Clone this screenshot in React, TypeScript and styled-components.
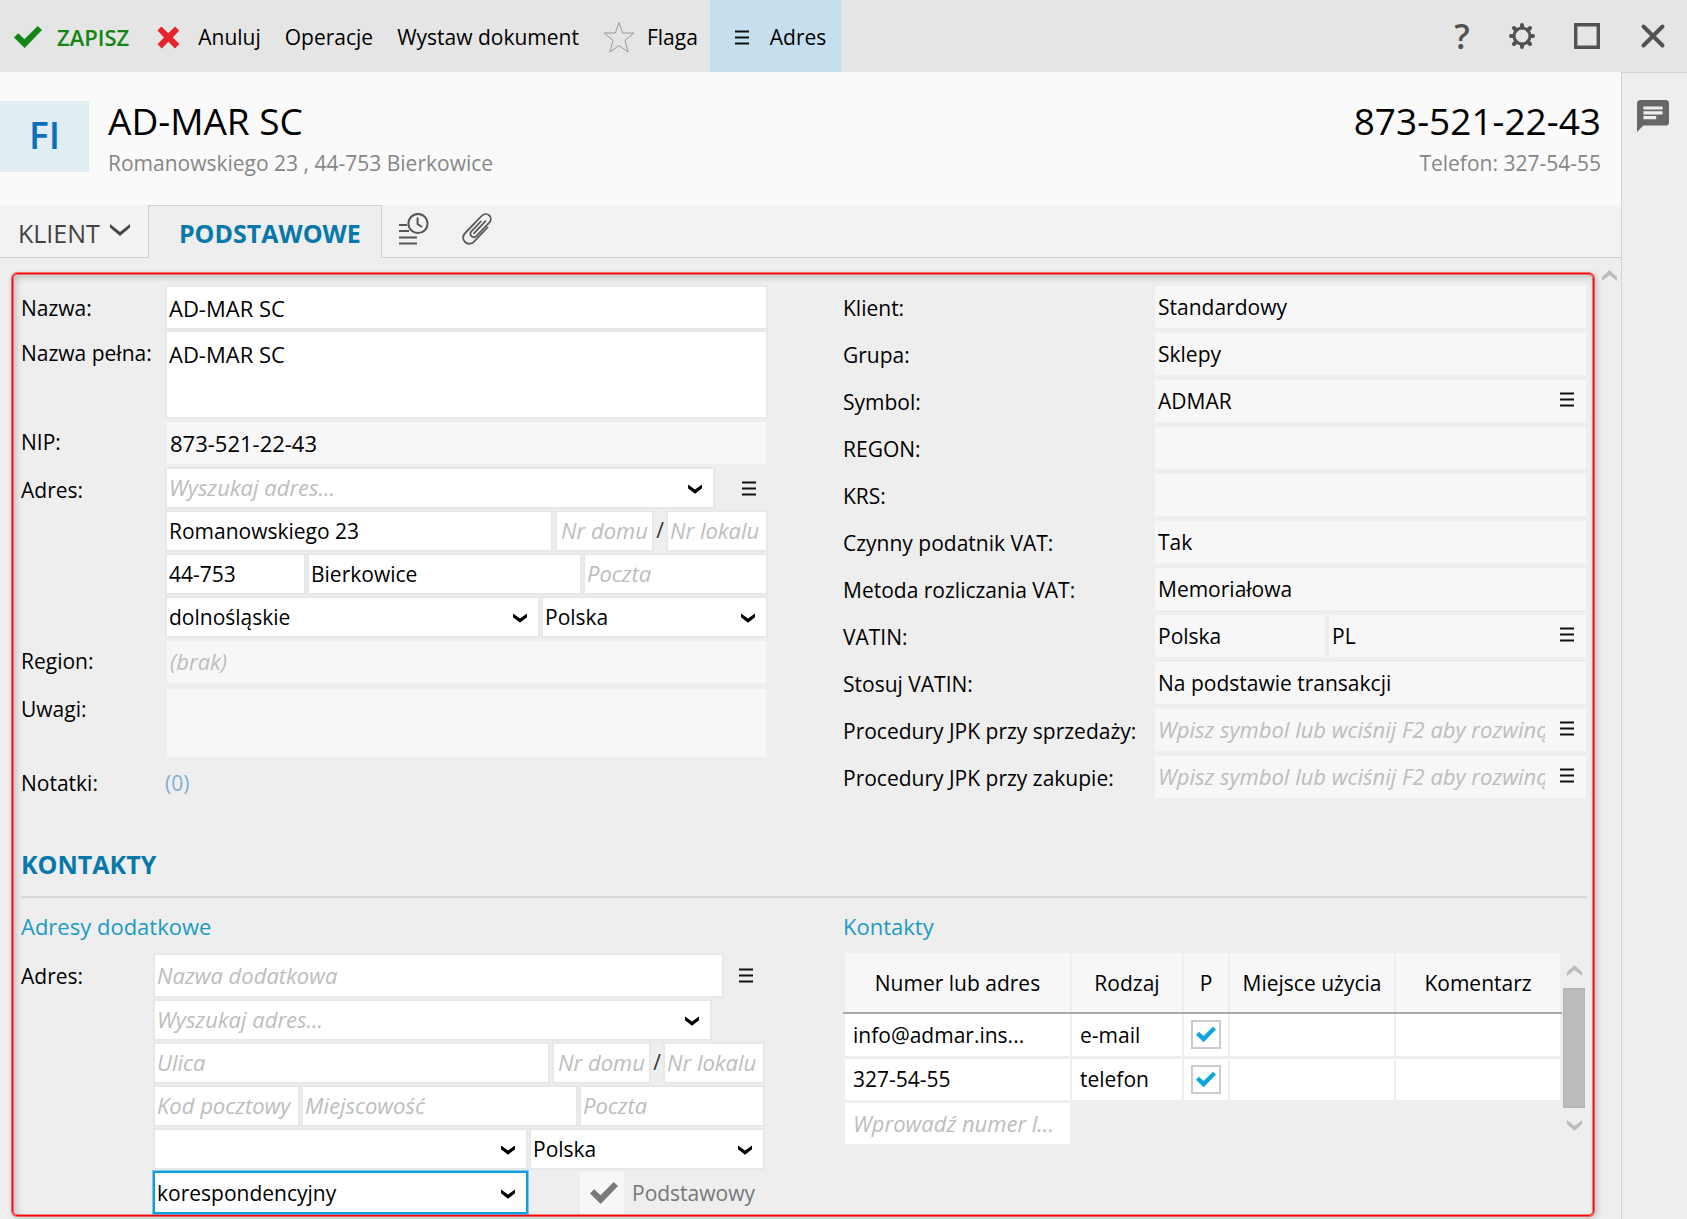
import React, { useState } from "react";
import styled, { createGlobalStyle, css } from "styled-components";

const font = '"Open Sans", "Noto Sans", "Liberation Sans", sans-serif';

const GlobalStyle = createGlobalStyle`
  * { box-sizing: border-box; }
  body { margin: 0; background: #eeeeee; color: #000; font: 21px/28px ${font}; }
  button, input, select, textarea { font: inherit; color: inherit; margin: 0; }
  button { border: 0; padding: 0; background: none; cursor: pointer; }
  svg { display: block; flex: none; }
`;

const Window = styled.div`
  display: flex;
  flex-direction: column;
  min-height: 100vh;
`;

/* ---------- toolbar ---------- */

const Toolbar = styled.header`
  display: flex;
  justify-content: space-between;
  height: 72px;
  background: #e5e5e5;
`;

const Actions = styled.div`
  display: flex;
  align-items: stretch;
`;

const Action = styled.button<{ $tone?: "save" | "cancel" | "active" }>`
  display: flex;
  align-items: center;
  gap: 12px;
  padding: 2px 12px 0;
  white-space: nowrap;
  ${(p) => p.$tone === "save" && css`gap: 15px; padding: 2px 14px 0; color: #128512; font-size: 22px; font-weight: 600;`}
  ${(p) => p.$tone === "cancel" && css`gap: 18px; padding-left: 14px;`}
  ${(p) => p.$tone === "active" && css`gap: 21px; padding: 2px 15px 0 25px; background: #c6dfee;`}
`;

const WindowActions = styled.div`
  display: flex;
  align-items: center;
  gap: 39px;
  padding-right: 20px;
  color: #525252;
`;

const IconButton = styled.button`
  display: flex;
  align-items: center;
  justify-content: center;
`;

const HelpButton = styled(IconButton)`
  width: 16px;
  font-size: 34px;
  font-weight: 600;
`;

/* ---------- frame of the page ---------- */

const Workspace = styled.div`
  display: flex;
  flex: 1;
`;

const Page = styled.main`
  display: flex;
  flex-direction: column;
  flex: 1;
  min-width: 0;
`;

const Sidebar = styled.aside`
  width: 66px;
  padding: 27px 0 0 15px;
  border-top: 1px solid #d3d3d3;
  border-left: 1px solid #d3d3d3;
  color: #666;
`;

const Banner = styled.section`
  display: flex;
  align-items: flex-start;
  gap: 19px;
  height: 133px;
  padding: 29px 20px 0 0;
  background: #fafafa;
`;

const Badge = styled.div`
  width: 89px;
  height: 71px;
  background: #e1ecf3;
  color: #0b70bb;
  font-size: 37px;
  font-weight: 600;
  line-height: 68px;
  text-align: center;
`;

const Heading = styled.div<{ $end?: boolean }>`
  margin-left: ${(p) => (p.$end ? "auto" : "0")};
  text-align: ${(p) => (p.$end ? "right" : "left")};
`;

const Title = styled.h1`
  margin: 0;
  font-size: 37px;
  font-weight: 400;
  line-height: 40px;
`;

const Subtitle = styled.p`
  margin: 8px 0 0;
  color: #868686;
`;

/* ---------- tabs ---------- */

const Tabs = styled.nav`
  display: flex;
  height: 53px;
  background: linear-gradient(#d0d0d0, #d0d0d0) bottom / 100% 1px no-repeat #f2f2f2;
`;

const Tab = styled.button<{ $active?: boolean }>`
  display: flex;
  align-items: center;
  justify-content: center;
  gap: 10px;
  padding: 2px 18px 0;
  color: #444;
  font-size: 25px;
  svg { margin-bottom: 6px; }
  ${(p) =>
    p.$active &&
    css`
      min-width: 234px;
      padding: 2px 16px 0 26px;
      border: 1px solid #cfcfcf;
      border-bottom: 0;
      background: #eeeeee;
      color: #0679aa;
      font-weight: 700;
    `}
`;

const IconTab = styled.button`
  display: flex;
  align-items: flex-start;
  width: 63px;
  padding: 8px 0 0 17px;
`;

/* ---------- scrolling form ---------- */

const Body = styled.div`
  display: flex;
  flex: 1;
`;

const FormPanel = styled.form`
  flex: 1;
  min-width: 0;
  margin: 15px 1px 3px 12px;
  padding: 11px 6px 0 8px;
  border: 1px solid #ff0000;
  border-radius: 5px;
  box-shadow: 0 0 0 1px rgba(255, 0, 0, 0.5), inset 0 0 0 1px rgba(255, 0, 0, 0.4),
    2px 2px 7px rgba(0, 0, 0, 0.24), inset 3px 3px 7px rgba(0, 0, 0, 0.2);
`;

const PageScroll = styled.div`
  width: 26px;
  padding: 12px 0 0 7px;
`;

const Columns = styled.div`
  display: grid;
  grid-template-columns: minmax(0, 747fr) minmax(0, 743fr);
  column-gap: 75px;
  margin-right: 1px;
`;

const Row = styled.div<{ $label: number; $gap?: number }>`
  display: grid;
  grid-template-columns: ${(p) => p.$label}px minmax(0, 1fr);
  margin-bottom: ${(p) => p.$gap ?? 0}px;
`;

const Label = styled.label`
  padding-top: 9px;
  white-space: nowrap;
`;

const DetailLabel = styled(Label)`
  padding-top: 8px;
`;

const Stack = styled.div<{ $end?: number }>`
  display: grid;
  row-gap: 1px;
  padding-right: ${(p) => p.$end ?? 0}px;
`;

const Line = styled.div<{ $gap?: number; $end?: number }>`
  display: flex;
  gap: ${(p) => p.$gap ?? 1}px;
  padding-right: ${(p) => p.$end ?? 0}px;
`;

const fieldBox = css`
  display: block;
  width: 100%;
  min-width: 0;
  height: 42px;
  padding: 0 2px;
  border: 2px solid #e8e8e8;
  border-radius: 0;
  outline: 0;
  background: #fff;
  &::placeholder { color: #bdbdbd; font-size: 22px; font-style: italic; opacity: 1; }
`;

const Field = styled.input<{ $w?: number; $tall?: boolean; $center?: boolean; $large?: boolean }>`
  ${fieldBox}
  ${(p) => p.$tall && css`height: 45px;`}
  ${(p) => p.$large && css`font-size: 22px;`}
  ${(p) => p.$center && css`text-align: center;`}
  ${(p) => p.$w && css`flex: 0 0 ${p.$w}px; width: ${p.$w}px;`}
`;

const Area = styled.textarea`
  ${fieldBox}
  height: 89px;
  padding-top: 8px;
  font-size: 22px;
  resize: none;
`;

const flatBox = css`
  border: 0;
  background: #f7f7f7;
`;

const FlatField = styled.input<{ $w?: number; $large?: boolean }>`
  ${fieldBox}
  ${flatBox}
  padding: 0 3px;
  ${(p) => p.$large && css`font-size: 22px;`}
  ${(p) => p.$w && css`flex: 0 0 ${p.$w}px; width: ${p.$w}px;`}
`;

const InsetFlat = styled.div`
  padding: 3px 2px 3px;
`;

const FlatArea = styled.textarea`
  ${fieldBox}
  ${flatBox}
  height: 68px;
  resize: none;
`;

const FlatGroup = styled.div`
  display: flex;
  flex: 1;
  min-width: 0;
  background: #f7f7f7;
`;

const FlatMenu = styled.button`
  flex: 0 0 38px;
  display: flex;
  align-items: center;
  justify-content: center;
  padding-bottom: 4px;
`;

const MenuButton = styled.button<{ $w: number }>`
  flex: 0 0 ${(p) => p.$w}px;
  display: flex;
  align-items: center;
  justify-content: flex-end;
  padding-right: 12px;
`;

const Slash = styled.span`
  flex: 0 0 12px;
  color: #333;
  line-height: 40px;
  text-align: center;
`;

const ComboBox = styled.div<{ $w?: number }>`
  position: relative;
  flex: ${(p) => (p.$w ? `0 0 ${p.$w}px` : "1")};
  min-width: 0;
`;

const Select = styled.select<{ $focus?: boolean }>`
  ${fieldBox}
  appearance: none;
  padding-right: 32px;
  ${(p) => p.$focus && css`height: 43px; border-color: #0f9fdf; box-shadow: 0 0 0 1px rgba(15, 159, 223, 0.5);`}
`;

const Arrow = styled.span`
  position: absolute;
  right: 13px;
  top: 50%;
  margin-top: -4px;
  pointer-events: none;
`;

const Notes = styled.a`
  padding-top: 9px;
  color: #7fb0d8;
  text-decoration: none;
`;

const SectionTitle = styled.h2`
  margin: 0;
  padding: 45px 0 16px;
  border-bottom: 2px solid #d8d8d8;
  color: #0679aa;
  font-size: 25px;
  font-weight: 700;
  line-height: 32px;
`;

const SubTitle = styled.h3`
  margin: 0;
  padding: 14px 0 13px;
  color: #1b9ac4;
  font-size: 22px;
  font-weight: 400;
`;

const MainAddress = styled.label`
  flex: 0 0 236px;
  display: flex;
  align-items: center;
  gap: 8px;
  padding-left: 51px;
  color: #777;
`;

const HiddenBox = styled.input`
  position: absolute;
  inset: 0;
  width: 100%;
  height: 100%;
  margin: 0;
  opacity: 0;
`;

const GrayTick = styled.span`
  position: relative;
  display: flex;
  align-items: center;
  justify-content: center;
  width: 44px;
  height: 42px;
  padding-left: 4px;
  background: #f7f7f7;
`;

/* ---------- contacts table ---------- */

const TableArea = styled.div`
  display: flex;
`;

const TableFrame = styled.div`
  flex: 1;
  min-width: 0;
`;

const Table = styled.table`
  width: 100%;
  table-layout: fixed;
  border-collapse: collapse;
`;

const HeadCell = styled.th<{ $w?: number }>`
  width: ${(p) => (p.$w ? `${p.$w}px` : "auto")};
  height: 60px;
  padding: 0;
  border: solid #eeeeee;
  border-width: 0 2px;
  border-bottom: 2px solid #a9a9a9;
  background: #f7f7f7;
  font-weight: 400;
  line-height: 26px;
  white-space: nowrap;
`;

const Cell = styled.td<{ $hint?: boolean; $empty?: boolean }>`
  height: 44px;
  padding: 0 8px;
  overflow: hidden;
  border: solid #eeeeee;
  border-width: 0 2px 3px;
  background: ${(p) => (p.$empty ? "transparent" : "#fff")};
  ${(p) => p.$hint && css`color: #bdbdbd; font-size: 22px; font-style: italic;`}
  text-overflow: ellipsis;
  white-space: nowrap;
`;

const Tick = styled.span`
  position: relative;
  display: flex;
  align-items: center;
  justify-content: center;
  width: 30px;
  height: 29px;
  margin: 0 auto;
  border: 2px solid #cccccc;
  background: #fff;
`;

const TickCell = styled(Cell)`
  padding: 0;
`;

const TableScroll = styled.div`
  display: flex;
  flex-direction: column;
  align-items: center;
  gap: 12px;
  width: 24px;
  padding: 12px 1px 0;
`;

const Thumb = styled.div`
  width: 22px;
  height: 120px;
  border: 1px solid #b3b3b3;
  background: #bbbbbb;
`;

/* ---------- icons ---------- */

const CheckIcon = ({ w, h, color }: { w: number; h: number; color: string }) => (
  <svg width={w} height={h} viewBox="0 0 28 22" fill={color} aria-hidden="true">
    <path d="M0 11.5 4.2 7.2 10.5 13.2 23.7 0 28 4 10.7 22Z" />
  </svg>
);

const CancelIcon = () => (
  <svg width="23" height="23" viewBox="0 0 23 23" fill="#e5242b" aria-hidden="true">
    <path d="M4.4.5 11.3 7.2 18 .5 22.3 4.6 15.8 11.4 22.3 18 18 22.4 11.3 15.8 4.8 22.4.6 18.2 7 11.4.5 4.6Z" />
  </svg>
);

const StarIcon = () => (
  <svg width="32" height="32" viewBox="0 0 32 32" fill="none" stroke="#9a9a9a" aria-hidden="true">
    <path d="M16 1.5 19.6 12H31L21.9 19.4 25.2 31 16 24.6 6.8 31 10.1 19.4 1 12H12.4Z" />
  </svg>
);

const MenuIcon = () => (
  <svg width="14" height="15" viewBox="0 0 14 15" stroke="#111" strokeWidth="2" aria-hidden="true">
    <path d="M0 1.5H14M0 7.5H14M0 13.5H14" />
  </svg>
);

const ArrowDown = () => (
  <svg width="14" height="10" viewBox="0 0 14 10" aria-hidden="true">
    <path d="M0 .5 7 5.4 14 .5V4.2L7 9.8 0 4.2Z" />
  </svg>
);

const ScrollArrow = ({ down }: { down?: boolean }) => (
  <svg width="15" height="11" viewBox="0 0 15 11" fill="#bdbdbd" aria-hidden="true">
    <path d={down ? "M0 0 7.5 6 15 0V4L7.5 11 0 4Z" : "M0 11 7.5 5 15 11V7L7.5 0 0 7Z"} />
  </svg>
);

const TabArrow = () => (
  <svg width="20" height="12" viewBox="0 0 20 12" fill="#444" aria-hidden="true">
    <path d="M0 0 10 8 20 0V3.5L10 12 0 3.5Z" />
  </svg>
);

const GearIcon = () => (
  <svg width="26" height="26" viewBox="0 0 26 26" fill="none" stroke="currentColor" aria-hidden="true">
    <circle cx="13" cy="13" r="8" strokeWidth="3" />
    <path
      d="M13 4.5V2M13 21.5V24M4.5 13H2M21.5 13H24M7 7 5 5M19 7 21 5M7 19 5 21M19 19 21 21"
      strokeWidth="4"
      strokeLinecap="round"
    />
  </svg>
);

const MaximizeIcon = () => (
  <svg width="26" height="26" viewBox="0 0 26 26" fill="none" stroke="currentColor" strokeWidth="3.4" aria-hidden="true">
    <path d="M1.7 1.7H24.3V24.3H1.7Z" />
  </svg>
);

const CloseIcon = () => (
  <svg width="28" height="28" viewBox="0 0 28 28" stroke="currentColor" strokeWidth="4" strokeLinecap="round" aria-hidden="true">
    <path d="M4.5 4.5 23.5 23.5M23.5 4.5 4.5 23.5" />
  </svg>
);

const ChatIcon = () => (
  <svg width="32" height="32" viewBox="2 2 20 20" fill="currentColor" aria-hidden="true">
    <path d="M20 2H4c-1.1 0-1.99.9-1.99 2L2 22l4-4h14c1.1 0 2-.9 2-2V4c0-1.1-.9-2-2-2zM6 9h12v2H6V9zm8 5H6v-2h8v2zm4-6H6V6h12v2z" />
  </svg>
);

const HistoryIcon = () => (
  <svg width="30" height="32" viewBox="0 0 30 32" fill="none" stroke="#555" strokeWidth="2" aria-hidden="true">
    <circle cx="19" cy="10.5" r="9.6" />
    <path d="M18.6 4.5V11L23 14" />
    <path d="M0 12H8M0 18H10M0 24.5H18M0 30.5H18" strokeWidth="1.8" />
  </svg>
);

const ClipIcon = () => (
  <svg width="30" height="32" viewBox="0 0 30 32" fill="none" stroke="#5a5a5a" strokeWidth="1.8" strokeLinecap="round" aria-hidden="true">
    <path d="M25.5 14.5 12.5 28.2C10.3 31 5.8 31.8 3 29 .2 26.2.8 22.4 3.2 20L19.5 3C21.8.7 25.2.4 27.3 2.4 29.4 4.5 29.2 7.6 27 10L14.5 22.8C13 24.3 10.8 24.5 9.4 23.1 8 21.7 8.2 19.6 9.6 18.1L18.8 8.5" />
    <path d="M23.5 8.2 12 20.4" />
  </svg>
);

/* ---------- composed controls ---------- */

interface ChoiceProps {
  label: string;
  value: string;
  width?: number;
  focus?: boolean;
}

const Choice = ({ label, value, width, focus }: ChoiceProps) => (
  <ComboBox $w={width}>
    <Select aria-label={label} defaultValue={value} $focus={focus}>
      <option value={value}>{value}</option>
    </Select>
    <Arrow><ArrowDown /></Arrow>
  </ComboBox>
);

const AddressSearch = ({ id }: { id?: string }) => (
  <ComboBox>
    <Field id={id} aria-label="Wyszukaj adres" placeholder="Wyszukaj adres..." />
    <Arrow><ArrowDown /></Arrow>
  </ComboBox>
);

interface AddressProps {
  street?: string;
  zip?: string;
  city?: string;
  region: string;
  zipWidth: number;
  postWidth: number;
  countryWidth: number;
}

const AddressLines = (p: AddressProps) => (
  <>
    <Line $gap={2}>
      <Field aria-label="Ulica" placeholder="Ulica" defaultValue={p.street} />
      <Line $gap={0}>
        <Field $w={99} $center aria-label="Nr domu" placeholder="Nr domu" />
        <Slash>/</Slash>
        <Field $w={102} aria-label="Nr lokalu" placeholder="Nr lokalu" />
      </Line>
    </Line>
    <Line>
      <Field $w={p.zipWidth} aria-label="Kod pocztowy" placeholder="Kod pocztowy" defaultValue={p.zip} />
      <Field aria-label="Miejscowość" placeholder="Miejscowość" defaultValue={p.city} />
      <Field $w={p.postWidth} aria-label="Poczta" placeholder="Poczta" />
    </Line>
    <Line>
      <Choice label="Województwo" value={p.region} />
      <Choice label="Kraj" value="Polska" width={p.countryWidth} />
    </Line>
  </>
);

const details: { label: string; value?: string; hint?: string; menu?: boolean; prefix?: string }[] = [
  { label: "Klient:", value: "Standardowy" },
  { label: "Grupa:", value: "Sklepy" },
  { label: "Symbol:", value: "ADMAR", menu: true },
  { label: "REGON:" },
  { label: "KRS:" },
  { label: "Czynny podatnik VAT:", value: "Tak" },
  { label: "Metoda rozliczania VAT:", value: "Memoriałowa" },
  { label: "VATIN:", value: "PL", prefix: "Polska", menu: true },
  { label: "Stosuj VATIN:", value: "Na podstawie transakcji" },
  { label: "Procedury JPK przy sprzedaży:", hint: "Wpisz symbol lub wciśnij F2 aby rozwinąć", menu: true },
  { label: "Procedury JPK przy zakupie:", hint: "Wpisz symbol lub wciśnij F2 aby rozwinąć", menu: true },
];

const DetailList = styled.div`
  padding-top: 1px;
`;

const contacts = [
  { value: "info@admar.ins...", kind: "e-mail" },
  { value: "327-54-55", kind: "telefon" },
];

const ContactTick = ({ label }: { label: string }) => {
  const [on, setOn] = useState(true);
  return (
    <Tick>
      {on && <CheckIcon w={20} h={17} color="#0aa6e0" />}
      <HiddenBox type="checkbox" aria-label={label} checked={on} onChange={() => setOn(!on)} />
    </Tick>
  );
};

export default function App() {
  return (
    <Window>
      <GlobalStyle />
      <Toolbar>
        <Actions>
          <Action $tone="save"><CheckIcon w={28} h={22} color="#128512" />ZAPISZ</Action>
          <Action $tone="cancel"><CancelIcon />Anuluj</Action>
          <Action>Operacje</Action>
          <Action>Wystaw dokument</Action>
          <Action><StarIcon />Flaga</Action>
          <Action $tone="active"><MenuIcon />Adres</Action>
        </Actions>
        <WindowActions>
          <HelpButton>?</HelpButton>
          <IconButton aria-label="Ustawienia"><GearIcon /></IconButton>
          <IconButton aria-label="Maksymalizuj"><MaximizeIcon /></IconButton>
          <IconButton aria-label="Zamknij"><CloseIcon /></IconButton>
        </WindowActions>
      </Toolbar>

      <Workspace>
        <Page>
          <Banner>
            <Badge>FI</Badge>
            <Heading>
              <Title>AD-MAR SC</Title>
              <Subtitle>Romanowskiego 23 , 44-753 Bierkowice</Subtitle>
            </Heading>
            <Heading $end>
              <Title as="p">873-521-22-43</Title>
              <Subtitle>Telefon: 327-54-55</Subtitle>
            </Heading>
          </Banner>

          <Tabs>
            <Tab>KLIENT <TabArrow /></Tab>
            <Tab $active>PODSTAWOWE</Tab>
            <IconTab aria-label="Historia"><HistoryIcon /></IconTab>
            <IconTab aria-label="Załączniki"><ClipIcon /></IconTab>
          </Tabs>

          <Body>
            <FormPanel onSubmit={(e) => e.preventDefault()}>
              <Columns>
                <div>
                  <Row $label={144}>
                    <Label htmlFor="name">Nazwa:</Label>
                    <Field id="name" $tall $large defaultValue="AD-MAR SC" />
                  </Row>
                  <Row $label={144}>
                    <Label htmlFor="fullname">Nazwa pełna:</Label>
                    <Area id="fullname" defaultValue="AD-MAR SC" />
                  </Row>
                  <Row $label={144}>
                    <Label htmlFor="nip">NIP:</Label>
                    <InsetFlat><FlatField id="nip" $large defaultValue="873-521-22-43" /></InsetFlat>
                  </Row>
                  <Row $label={144}>
                    <Label htmlFor="address">Adres:</Label>
                    <Stack>
                      <Line $gap={0}>
                        <AddressSearch id="address" />
                        <MenuButton type="button" aria-label="Menu adresu" $w={53}><MenuIcon /></MenuButton>
                      </Line>
                      <AddressLines
                        street="Romanowskiego 23"
                        zip="44-753"
                        city="Bierkowice"
                        region="dolnośląskie"
                        zipWidth={141}
                        postWidth={185}
                        countryWidth={227}
                      />
                    </Stack>
                  </Row>
                  <Row $label={144}>
                    <Label htmlFor="region">Region:</Label>
                    <InsetFlat><FlatField id="region" placeholder="(brak)" /></InsetFlat>
                  </Row>
                  <Row $label={144}>
                    <Label htmlFor="remarks">Uwagi:</Label>
                    <InsetFlat><FlatArea id="remarks" /></InsetFlat>
                  </Row>
                  <Row $label={144}>
                    <Label as="span">Notatki:</Label>
                    <Notes href="#notatki">(0)</Notes>
                  </Row>
                </div>

                <DetailList>
                  {details.map((d, i) => (
                    <Row key={d.label} $label={312} $gap={5}>
                      <DetailLabel htmlFor={`detail-${i}`}>{d.label}</DetailLabel>
                      <Line $gap={4}>
                        {d.prefix && <FlatField $w={170} aria-label="Kraj VATIN" defaultValue={d.prefix} />}
                        <FlatGroup>
                          <FlatField id={`detail-${i}`} defaultValue={d.value} placeholder={d.hint} />
                          {d.menu && <FlatMenu type="button" aria-label={`Menu ${d.label}`}><MenuIcon /></FlatMenu>}
                        </FlatGroup>
                      </Line>
                    </Row>
                  ))}
                </DetailList>
              </Columns>

              <SectionTitle>KONTAKTY</SectionTitle>

              <Columns>
                <div>
                  <SubTitle>Adresy dodatkowe</SubTitle>
                  <Row $label={132}>
                    <Label htmlFor="extra">Adres:</Label>
                    <Stack $end={3}>
                      <Line $gap={0}>
                        <Field id="extra" $tall placeholder="Nazwa dodatkowa" />
                        <MenuButton type="button" aria-label="Menu adresu dodatkowego" $w={41}><MenuIcon /></MenuButton>
                      </Line>
                      <Line $end={53}><AddressSearch /></Line>
                      <AddressLines region="" zipWidth={147} postWidth={186} countryWidth={236} />
                      <Line>
                        <Choice label="Rodzaj adresu" value="korespondencyjny" focus />
                        <MainAddress>
                          <GrayTick>
                            <CheckIcon w={28} h={22} color="#7a7a7a" />
                            <HiddenBox type="checkbox" defaultChecked disabled />
                          </GrayTick>
                          Podstawowy
                        </MainAddress>
                      </Line>
                    </Stack>
                  </Row>
                </div>

                <div>
                  <SubTitle>Kontakty</SubTitle>
                  <TableArea>
                    <TableFrame>
                      <Table>
                        <thead>
                          <tr>
                            <HeadCell $w={227}>Numer lub adres</HeadCell>
                            <HeadCell $w={112}>Rodzaj</HeadCell>
                            <HeadCell $w={46}>P</HeadCell>
                            <HeadCell>Miejsce użycia</HeadCell>
                            <HeadCell>Komentarz</HeadCell>
                          </tr>
                        </thead>
                        <tbody>
                          {contacts.map((c) => (
                            <tr key={c.value}>
                              <Cell>{c.value}</Cell>
                              <Cell>{c.kind}</Cell>
                              <TickCell><ContactTick label={`Podstawowy: ${c.kind}`} /></TickCell>
                              <Cell />
                              <Cell />
                            </tr>
                          ))}
                          <tr>
                            <Cell $hint>Wprowadź numer l...</Cell>
                            <Cell $empty colSpan={4} />
                          </tr>
                        </tbody>
                      </Table>
                    </TableFrame>
                    <TableScroll>
                      <ScrollArrow />
                      <Thumb />
                      <ScrollArrow down />
                    </TableScroll>
                  </TableArea>
                </div>
              </Columns>
            </FormPanel>
            <PageScroll><ScrollArrow /></PageScroll>
          </Body>
        </Page>

        <Sidebar>
          <IconButton aria-label="Wiadomości"><ChatIcon /></IconButton>
        </Sidebar>
      </Workspace>
    </Window>
  );
}
